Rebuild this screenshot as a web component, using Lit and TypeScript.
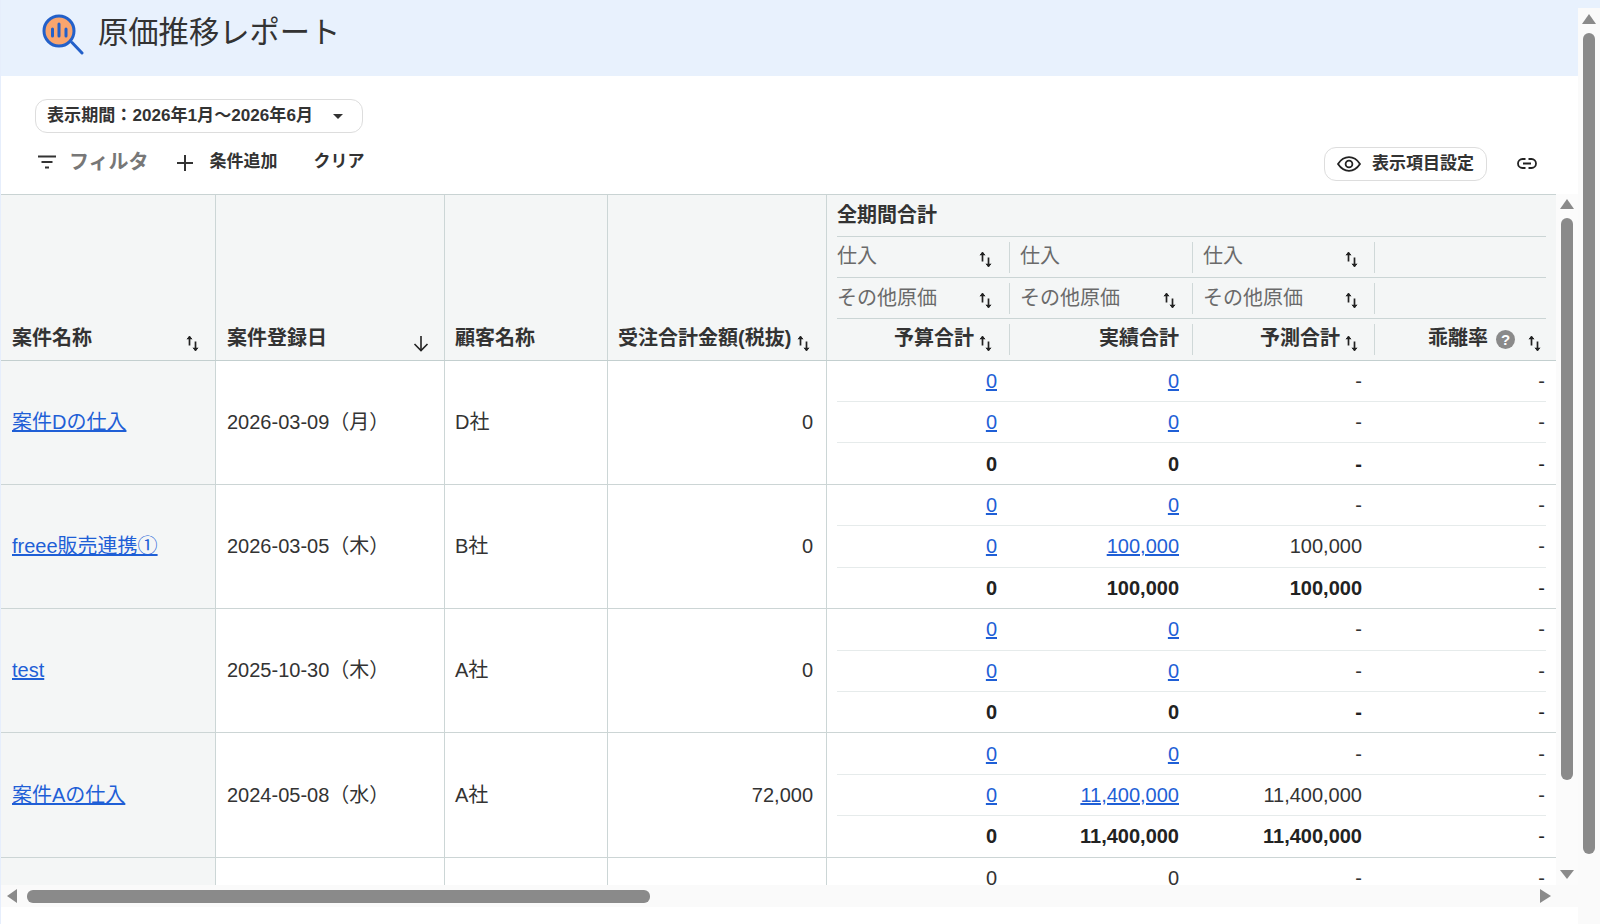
import { LitElement, html, css } from "lit";
import { customElement } from "lit/decorators.js";

type Row = { name: string; date: string; cust: string; amt: string; link: boolean; vals: string[][] };

const rows: Row[] = [
  { name: "案件Dの仕入", date: "2026-03-09（月）", cust: "D社", amt: "0", link: true,
    vals: [["0","0","-","-"],["0","0","-","-"],["0","0","-","-"]] },
  { name: "freee販売連携①", date: "2026-03-05（木）", cust: "B社", amt: "0", link: true,
    vals: [["0","0","-","-"],["0","100,000","100,000","-"],["0","100,000","100,000","-"]] },
  { name: "test", date: "2025-10-30（木）", cust: "A社", amt: "0", link: true,
    vals: [["0","0","-","-"],["0","0","-","-"],["0","0","-","-"]] },
  { name: "案件Aの仕入", date: "2024-05-08（水）", cust: "A社", amt: "72,000", link: true,
    vals: [["0","0","-","-"],["0","11,400,000","11,400,000","-"],["0","11,400,000","11,400,000","-"]] },
  { name: "", date: "", cust: "", amt: "", link: false,
    vals: [["0","0","-","-"],["","","",""],["","","",""]] },
];

const sortIcon = html`<svg class="sort" width="13" height="17" viewBox="0 0 13 17" fill="none" stroke="#222" stroke-width="1.7">
  <path d="M3.5 10.5V1.5"/><path d="M1 4.2 3.5 1.2 6 4.2" fill="#222" stroke-width="1"/>
  <path d="M9.5 6.5V15.5"/><path d="M7 12.8 9.5 15.8 12 12.8" fill="#222" stroke-width="1"/>
</svg>`;

const downIcon = html`<svg class="sort" width="16" height="17" viewBox="0 0 16 17" fill="none" stroke="#222" stroke-width="1.6">
  <path d="M8 1v14.5"/><path d="M1.5 9 8 15.5 14.5 9"/>
</svg>`;

@customElement("app-root")
export class AppRoot extends LitElement {
  static styles = css`
    :host {
      display: block;
      height: 924px;
      overflow: hidden;
      font-family: "Liberation Sans", "Noto Sans CJK JP", sans-serif;
      line-height: 24px;
      color: #333;
      background: #fff;
    }
    * { box-sizing: border-box; }
    .page { display: flex; height: 924px; }
    .main { width: 1578px; flex: none; display: flex; flex-direction: column; border-left: 1px solid #e6eefc; }
    .outer { width: 22px; flex: none; background: #fafafa; display: flex; flex-direction: column; align-items: center; position: relative; }
    .outer .cap { height: 8px; width: 100%; background: #e8f1fd; flex: none; }
    .up { width: 0; height: 0; border-left: 7px solid transparent; border-right: 7px solid transparent; border-bottom: 10px solid #8a8a8a; flex: none; }
    .down { width: 0; height: 0; border-left: 7px solid transparent; border-right: 7px solid transparent; border-top: 9px solid #8a8a8a; flex: none; }
    .vthumb { width: 12px; background: #8a8a8a; border-radius: 6px; flex: none; }
    .outer .up { margin-top: 6px; }
    .outer .vthumb { margin-top: 9px; height: 821px; }

    .head { height: 76px; flex: none; background: #e8f1fd; display: flex; align-items: flex-start; padding: 14px 0 0 41px; gap: 14px; }
    .head h1 { margin: -1px 0 0; font-size: 30.3px; line-height: 40px; font-weight: 400; color: #333; }

    .tools { height: 118px; flex: none; padding: 23px 0 0 34px; position: relative; }
    .chip { width: 328px; height: 34px; border: 1px solid #ddd; border-radius: 12px; display: flex; align-items: center; justify-content: space-between; padding: 0 19px 0 11px; font-size: 17.1px; font-weight: 700; color: #333; }
    .caret { width: 0; height: 0; border-left: 5.5px solid transparent; border-right: 5.5px solid transparent; border-top: 5.5px solid #333; }
    .bar { display: flex; align-items: center; height: 34px; margin-top: 14px; padding-right: 41px; }
    .bar .filter { margin-left: 3px; margin-top: -4px; }
    .flabel { font-size: 20px; font-weight: 700; color: #777; margin-left: 13px; margin-top: -5px; }
    .plus { margin-left: 28px; margin-top: -3px; }
    .act { font-size: 17px; font-weight: 700; color: #333; white-space: nowrap; margin-top: -4px; }
    .add { margin-left: 17px; }
    .clear { margin-left: 36px; }
    .spacer { flex: 1; }
    .btn { width: 163px; height: 34px; border: 1px solid #ddd; border-radius: 12px; display: flex; align-items: center; padding-left: 12px; gap: 11px; font-size: 17px; font-weight: 700; color: #333; }
    .linkic { margin-left: 30px; margin-top: -1px; }

    .area { height: 691px; flex: none; display: flex; }
    .view { width: 1555px; flex: none; overflow: hidden; }
    .inner { width: 22px; flex: none; background: #fbfbfb; display: flex; flex-direction: column; align-items: center; }
    .inner .up { margin-top: 5px; }
    .inner .vthumb { margin-top: 9px; height: 562px; }
    .inner .down { margin-top: 90px; }

    .grid { display: grid; grid-template-columns: 215px 229px 163px 219px 729px; }
    .hrow { height: 166.5px; border-top: 1px solid #c9d3d3; border-bottom: 1.5px solid #c3cfcf; background: #f4f6f6; }
    .th { border-right: 1px solid #ccd6d6; display: flex; align-items: flex-end; justify-content: space-between; padding: 0 16px 1px 11px; height: 100%; }
    .th .lbl, .sub .lbl { font-size: 20px; font-weight: 700; color: #333; white-space: nowrap; line-height: 41px; }
    .sub .lbl { margin-top: -2px; }
    .th .sort { margin-bottom: 7px; }
    .th.c2 { padding-left: 11px; padding-right: 15px; }
    .th.c3 { padding-left: 10px; }
    .th.c4 { padding-left: 10px; }

    .group { padding: 0 10px; display: flex; flex-direction: column; }
    .gtitle { height: 41px; padding-bottom: 2px; font-size: 20px; font-weight: 700; color: #333; display: flex; align-items: center; }
    .hline { display: grid; grid-template-columns: 172px 183px 182px 172px; border-top: 1px solid #cbd5d5; height: 41px; align-items: center; }
    .hline.first .sub > span { margin-top: -2px; }
    .hline.last { height: 42px; }
    .sub { height: 31px; display: flex; align-items: center; justify-content: space-between; font-size: 20px; color: #6a6a6a; border-left: 1px solid #cfd8d8; padding: 0 16px 0 10px; white-space: nowrap; }
    .sub:first-child { border-left: none; padding-left: 0; padding-right: 17px; }
    .sub .sort { margin-top: 4px; }
    .sub.right { justify-content: flex-end; gap: 5px; }
    .sub.right .sort { margin-top: 7px; }
    .sub.tot { padding-right: 13px; }
    .sub.rate { padding-right: 5px; gap: 0; }
    .help { width: 19px; height: 19px; border-radius: 50%; background: #8a8a8a; color: #fff; font-size: 15px; line-height: 19px; font-weight: 700; display: flex; align-items: center; justify-content: center; margin: 0 13px 0 8px; }

    .row { height: 124.3px; border-bottom: 1.5px solid #ccd5d5; }
    .cell { border-right: 1px solid #ccd6d6; display: flex; align-items: center; font-size: 20px; color: #333; padding: 0 12px 1px; white-space: nowrap; }
    .cell.first { background: #f4f6f6; padding-left: 11px; }
    .cell.date { padding-left: 11px; }
    .cell.cust { padding-left: 10px; }
    .cell.amt { justify-content: flex-end; padding-right: 13px; }
    a { color: #1f5fd6; text-decoration: underline; }
    .vals { padding: 0 10px; display: flex; flex-direction: column; }
    .vrow { flex: 1; display: grid; grid-template-columns: 172px 183px 182px 172px; align-items: center; border-top: 1px solid #e6ebeb; font-size: 20px; color: #333; text-align: right; }
    .vrow:first-child { border-top: none; }
    .vrow > span { padding-right: 13px; }
    .vrow > span:nth-child(1) { padding-right: 12px; }
    .vrow > span:nth-child(3) { padding-right: 12px; }
    .vrow > span:nth-child(4) { padding-right: 1px; font-weight: 400; }
    .vrow.sum { font-weight: 700; color: #222; }

    .hbar { height: 22px; flex: none; background: #fafafa; display: flex; align-items: center; padding: 0 27px 0 6px; }
    .left { width: 0; height: 0; border-top: 7px solid transparent; border-bottom: 7px solid transparent; border-right: 10px solid #8a8a8a; flex: none; }
    .right-a { width: 0; height: 0; border-top: 7px solid transparent; border-bottom: 7px solid transparent; border-left: 11px solid #8a8a8a; flex: none; margin-left: auto; }
    .hthumb { width: 623px; height: 13px; background: #8a8a8a; border-radius: 6px; margin-left: 10px; flex: none; }
    .rest { flex: 1; background: #fff; }
  `;

  private logo() {
    return html`<svg width="42" height="42" viewBox="0 0 42 42" fill="none">
      <circle cx="17" cy="17" r="15" fill="#f9a56e" stroke="#2360c9" stroke-width="3"/>
      <path d="M30 28.5 40 39" stroke="#2360c9" stroke-width="3" stroke-linecap="round"/>
      <path d="M10.5 15v7M17 10v12M24 15v7" stroke="#2360c9" stroke-width="3" stroke-linecap="round"/>
    </svg>`;
  }

  private renderVals(r: Row) {
    return html`<div class="vals">
      ${r.vals.map((v, i) => {
        const isLink = r.link && i < 2;
        return html`<div class="vrow ${i === 2 && r.link ? "sum" : ""}">
          ${v.map((x, j) => html`<span>${isLink && j < 2 ? html`<a href="#">${x}</a>` : x}</span>`)}
        </div>`;
      })}
    </div>`;
  }

  render() {
    return html`<div class="page">
      <div class="main">
        <div class="head">
          ${this.logo()}
          <h1>原価推移レポート</h1>
        </div>
        <div class="tools">
          <div class="chip"><span>表示期間：2026年1月〜2026年6月</span><span class="caret"></span></div>
          <div class="bar">
            <svg class="filter" width="18" height="14" viewBox="0 0 18 14" fill="none" stroke="#333" stroke-width="2">
              <path d="M0 1.5h18M3.5 7h11M7 12.5h4"/>
            </svg>
            <span class="flabel">フィルタ</span>
            <svg class="plus" width="16" height="16" viewBox="0 0 16 16" fill="none" stroke="#333" stroke-width="2"><path d="M8 0v16M0 8h16"/></svg>
            <span class="act add">条件追加</span>
            <span class="act clear">クリア</span>
            <span class="spacer"></span>
            <div class="btn">
              <svg width="24" height="16" viewBox="0 0 24 16" fill="none" stroke="#222" stroke-width="1.8">
                <path d="M1 8c3-4.5 6.5-6.8 11-6.8S20 3.5 23 8c-3 4.5-6.5 6.8-11 6.8S4 12.5 1 8z"/>
                <circle cx="12" cy="8" r="3.4"/>
              </svg>
              <span>表示項目設定</span>
            </div>
            <svg class="linkic" width="20" height="11" viewBox="0 0 20 11" fill="none" stroke="#222" stroke-width="1.8">
              <path d="M8.5 1H5.5a4.5 4.5 0 0 0 0 9h3M11.5 1h3a4.5 4.5 0 0 1 0 9h-3M6 5.5h8"/>
            </svg>
          </div>
        </div>
        <div class="area">
          <div class="view">
            <div class="grid hrow">
              <div class="th"><span class="lbl">案件名称</span>${sortIcon}</div>
              <div class="th c2"><span class="lbl">案件登録日</span>${downIcon}</div>
              <div class="th c3"><span class="lbl">顧客名称</span></div>
              <div class="th c4"><span class="lbl">受注合計金額(税抜)</span>${sortIcon}</div>
              <div class="group">
                <div class="gtitle">全期間合計</div>
                <div class="hline first">
                  <div class="sub"><span>仕入</span>${sortIcon}</div>
                  <div class="sub"><span>仕入</span></div>
                  <div class="sub"><span>仕入</span>${sortIcon}</div>
                  <div class="sub"></div>
                </div>
                <div class="hline">
                  <div class="sub"><span>その他原価</span>${sortIcon}</div>
                  <div class="sub"><span>その他原価</span>${sortIcon}</div>
                  <div class="sub"><span>その他原価</span>${sortIcon}</div>
                  <div class="sub"></div>
                </div>
                <div class="hline last">
                  <div class="sub right"><span class="lbl">予算合計</span>${sortIcon}</div>
                  <div class="sub right tot"><span class="lbl">実績合計</span></div>
                  <div class="sub right"><span class="lbl">予測合計</span>${sortIcon}</div>
                  <div class="sub right rate"><span class="lbl">乖離率</span><span class="help">?</span>${sortIcon}</div>
                </div>
              </div>
            </div>
            ${rows.map(
              (r) => html`<div class="grid row">
                <div class="cell first">${r.name ? html`<a href="#">${r.name}</a>` : ""}</div>
                <div class="cell date">${r.date}</div>
                <div class="cell cust">${r.cust}</div>
                <div class="cell amt">${r.amt}</div>
                ${this.renderVals(r)}
              </div>`
            )}
          </div>
          <div class="inner">
            <span class="up"></span>
            <span class="vthumb"></span>
            <span class="down"></span>
          </div>
        </div>
        <div class="hbar">
          <span class="left"></span>
          <span class="hthumb"></span>
          <span class="right-a"></span>
        </div>
        <div class="rest"></div>
      </div>
      <div class="outer">
        <span class="cap"></span>
        <span class="up"></span>
        <span class="vthumb"></span>
      </div>
    </div>`;
  }
}
